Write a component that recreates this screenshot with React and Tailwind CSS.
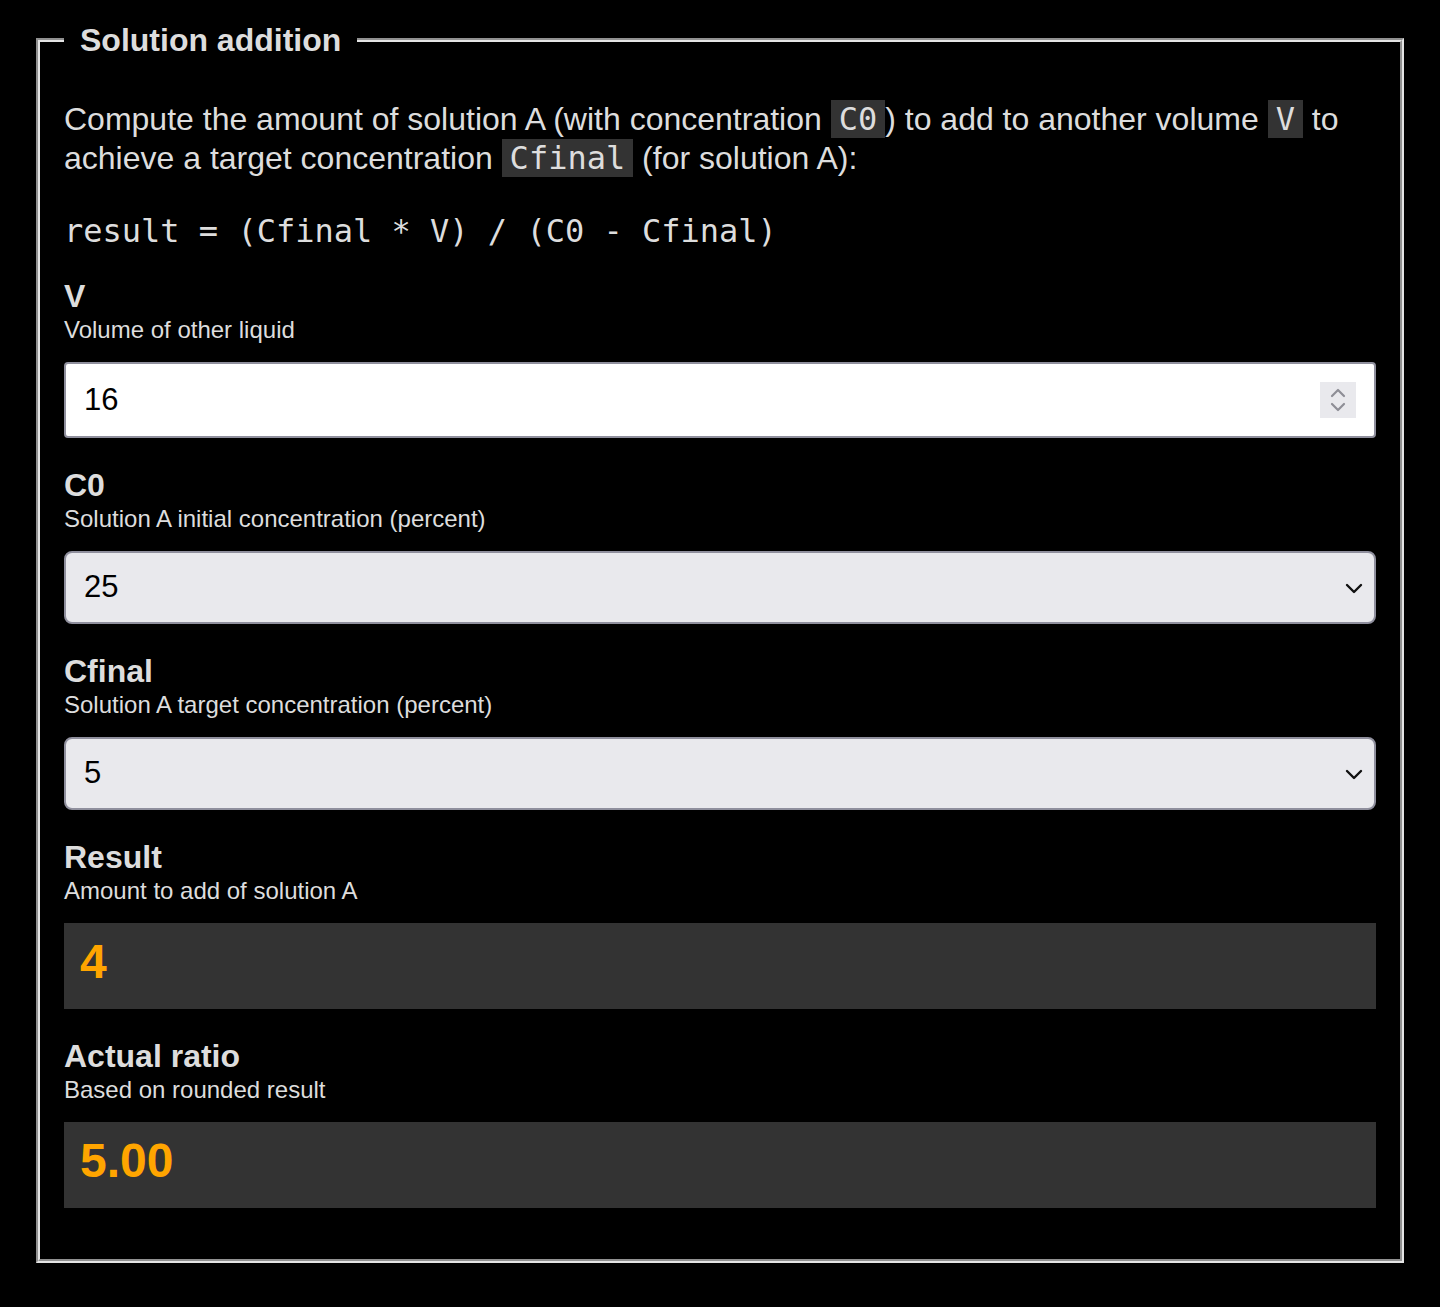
import React from "react";

const sans = { fontFamily: '"Liberation Sans", Arial, Helvetica, sans-serif' };

function Code({ children }) {
  return (
    <code className="bg-[#333333] px-[8px] font-['DejaVu_Sans_Mono',monospace] text-[32px] text-[#dddddd]">
      {children}
    </code>
  );
}

function Field({ label, sub, children }) {
  return (
    <div className="mb-[29px]">
      <div className="text-[32px] font-bold leading-[37px] text-[#dddddd]">{label}</div>
      <div className="text-[24px] leading-[30px] text-[#dddddd]">{sub}</div>
      <div className="mt-[17px]">{children}</div>
    </div>
  );
}

function Chevron() {
  return (
    <svg width="18" height="12" viewBox="0 0 18 12" className="shrink-0">
      <path d="M2 3 L9 10 L16 3" fill="none" stroke="#111" strokeWidth="2.4" strokeLinecap="round" strokeLinejoin="round" />
    </svg>
  );
}

function SelectBox({ value }) {
  return (
    <div className="flex h-[73px] items-center justify-between rounded-[8px] border-2 border-[#8f8f9d] bg-[#e9e9ed] pl-[18px] pr-[11px]">
      <span className="text-[31px] text-black">{value}</span>
      <Chevron />
    </div>
  );
}

function ResultBox({ value }) {
  return (
    <div className="flex h-[86px] items-center bg-[#333333] px-[16px] pb-[8px]">
      <span className="text-[48px] font-bold text-[#ffa500]">{value}</span>
    </div>
  );
}

export default function App() {
  return (
    <div className="min-h-[1307px] bg-black pl-[36px] pr-[36px] pt-[20px]" style={sans}>
      <fieldset className="w-[1368px] border-[4px] border-[#e4e4e4] px-[24px] pb-[22px] [border-style:groove]">
        <legend className="px-[16px] text-[32px] font-bold leading-[40px] text-[#dddddd]">
          Solution addition
        </legend>
        <p className="mt-[40px] text-[32px] leading-[39px] text-[#dddddd]">
          Compute the amount of solution A (with concentration <Code>C0</Code>) to add to another volume{" "}
          <Code>V</Code> to achieve a target concentration <Code>Cfinal</Code> (for solution A):
        </p>
        <pre className="mt-[33px] mb-[27px] font-['DejaVu_Sans_Mono',monospace] text-[32px] leading-[40px] text-[#dddddd]">
          result = (Cfinal * V) / (C0 - Cfinal)
        </pre>
        <Field label="V" sub="Volume of other liquid">
          <div className="flex h-[76px] items-center rounded-[4px] border-2 border-[#8f8f9d] bg-white pl-[18px] pr-[18px]">
            <span className="flex-1 text-[31px] text-black">16</span>
            <div className="flex h-[36px] w-[36px] flex-col items-center justify-center bg-[#e9e9ed]">
              <svg width="18" height="28" viewBox="0 0 18 28">
                <path d="M3 10 L9 4 L15 10" fill="none" stroke="#8e8e96" strokeWidth="2.2" strokeLinecap="round" strokeLinejoin="round" />
                <path d="M3 18 L9 24 L15 18" fill="none" stroke="#8e8e96" strokeWidth="2.2" strokeLinecap="round" strokeLinejoin="round" />
              </svg>
            </div>
          </div>
        </Field>
        <Field label="C0" sub="Solution A initial concentration (percent)">
          <SelectBox value="25" />
        </Field>
        <Field label="Cfinal" sub="Solution A target concentration (percent)">
          <SelectBox value="5" />
        </Field>
        <Field label="Result" sub="Amount to add of solution A">
          <ResultBox value="4" />
        </Field>
        <Field label="Actual ratio" sub="Based on rounded result">
          <ResultBox value="5.00" />
        </Field>
      </fieldset>
    </div>
  );
}
